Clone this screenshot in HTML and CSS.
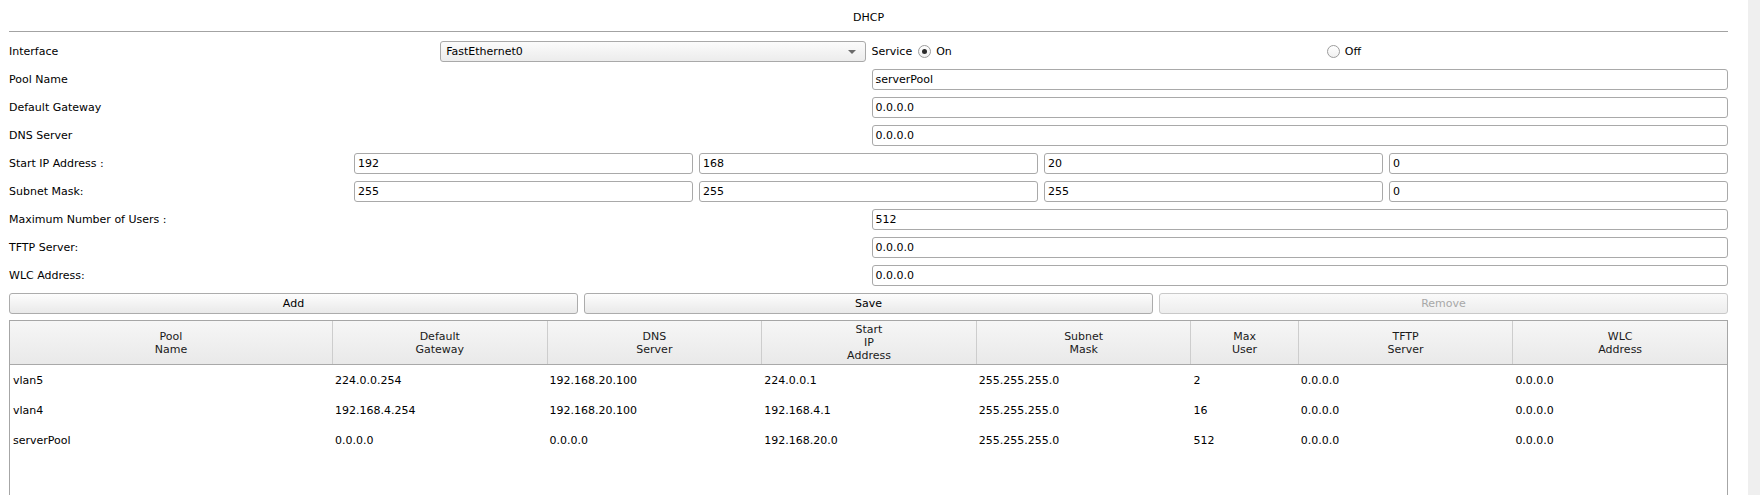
FILE: index.html
```html
<!DOCTYPE html>
<html>
<head>
<meta charset="utf-8">
<link rel="stylesheet" href="styles.css">
</head>
<body>
<div class="window">
  <div class="main">
    <div class="title">DHCP</div>
    <div class="form">
      <div class="row row4">
        <div class="label">Interface</div>
        <div class="select"><span>FastEthernet0</span><span class="arrow"></span></div>
        <div class="service">
          <span class="svc-label">Service</span>
          <span class="radio checked"></span>
          <span class="radio-text">On</span>
        </div>
        <div class="service off">
          <span class="radio"></span>
          <span class="radio-text">Off</span>
        </div>
      </div>
      <div class="row row2">
        <div class="label">Pool Name</div>
        <div class="input">serverPool</div>
      </div>
      <div class="row row2">
        <div class="label">Default Gateway</div>
        <div class="input">0.0.0.0</div>
      </div>
      <div class="row row2">
        <div class="label">DNS Server</div>
        <div class="input">0.0.0.0</div>
      </div>
      <div class="row row5">
        <div class="label">Start IP Address :</div>
        <div class="input">192</div>
        <div class="input">168</div>
        <div class="input">20</div>
        <div class="input">0</div>
      </div>
      <div class="row row5">
        <div class="label">Subnet Mask:</div>
        <div class="input">255</div>
        <div class="input">255</div>
        <div class="input">255</div>
        <div class="input">0</div>
      </div>
      <div class="row row2">
        <div class="label">Maximum Number of Users :</div>
        <div class="input">512</div>
      </div>
      <div class="row row2">
        <div class="label">TFTP Server:</div>
        <div class="input">0.0.0.0</div>
      </div>
      <div class="row row2">
        <div class="label">WLC Address:</div>
        <div class="input">0.0.0.0</div>
      </div>
      <div class="row row3">
        <div class="button">Add</div>
        <div class="button">Save</div>
        <div class="button disabled">Remove</div>
      </div>
    </div>
    <div class="table">
      <div class="thead">
        <div class="th">Pool<br>Name</div>
        <div class="th">Default<br>Gateway</div>
        <div class="th">DNS<br>Server</div>
        <div class="th">Start<br>IP<br>Address</div>
        <div class="th">Subnet<br>Mask</div>
        <div class="th">Max<br>User</div>
        <div class="th">TFTP<br>Server</div>
        <div class="th">WLC<br>Address</div>
      </div>
      <div class="tr">
        <div class="td">vlan5</div><div class="td">224.0.0.254</div><div class="td">192.168.20.100</div><div class="td">224.0.0.1</div><div class="td">255.255.255.0</div><div class="td">2</div><div class="td">0.0.0.0</div><div class="td">0.0.0.0</div>
      </div>
      <div class="tr">
        <div class="td">vlan4</div><div class="td">192.168.4.254</div><div class="td">192.168.20.100</div><div class="td">192.168.4.1</div><div class="td">255.255.255.0</div><div class="td">16</div><div class="td">0.0.0.0</div><div class="td">0.0.0.0</div>
      </div>
      <div class="tr">
        <div class="td">serverPool</div><div class="td">0.0.0.0</div><div class="td">0.0.0.0</div><div class="td">192.168.20.0</div><div class="td">255.255.255.0</div><div class="td">512</div><div class="td">0.0.0.0</div><div class="td">0.0.0.0</div>
      </div>
    </div>
  </div>
  <div class="track"></div>
</div>
</body>
</html>
```

FILE: styles.css
```css
html, body {
  margin: 0;
  padding: 0;
  background: #ffffff;
  overflow: hidden;
}
body {
  font-family: "DejaVu Sans", "Liberation Sans", sans-serif;
  font-size: 11px;
  color: #000000;
}
.window {
  display: flex;
  height: 495px;
}
.main {
  flex: 1;
  padding: 0 20px 0 9px;
  min-width: 0;
}
.track {
  width: 12px;
  background: #efefef;
}
.title {
  text-align: center;
  padding-top: 11px;
  padding-bottom: 6px;
  line-height: 14px;
  border-bottom: 1px solid #a3a3a3;
}
.form {
  display: flex;
  flex-direction: column;
  gap: 7px;
  padding-top: 9px;
}
.row {
  display: grid;
  column-gap: 6px;
  height: 21px;
}
.row2 { grid-template-columns: 1fr 1fr; }
.row3 { grid-template-columns: 1fr 1fr 1fr; }
.row4 { grid-template-columns: 1fr 1fr 1fr 1fr; }
.row5 { grid-template-columns: 1fr 1fr 1fr 1fr 1fr; }
.label {
  display: flex;
  align-items: center;
}
.input {
  box-sizing: border-box;
  height: 21px;
  border: 1px solid #a9a9a9;
  border-radius: 3px;
  background: #ffffff;
  padding-left: 3px;
  display: flex;
  align-items: center;
}
.select {
  box-sizing: border-box;
  height: 21px;
  border: 1px solid #a9a9a9;
  border-radius: 3px;
  background: linear-gradient(#fbfbfb, #ececec);
  padding: 0 9px 0 5px;
  display: flex;
  align-items: center;
  justify-content: space-between;
}
.arrow {
  width: 0;
  height: 0;
  border-left: 4px solid transparent;
  border-right: 4px solid transparent;
  border-top: 4px solid #6a6a6a;
}
.service {
  display: flex;
  align-items: center;
}
.service.off {
  padding-left: 24px;
}
.svc-label {
  margin-right: 6px;
}
.radio {
  box-sizing: border-box;
  width: 13px;
  height: 13px;
  border: 1px solid #9c9c9c;
  border-radius: 50%;
  background: linear-gradient(#ffffff, #f0f0f0);
  display: inline-flex;
  align-items: center;
  justify-content: center;
  margin-right: 5px;
}
.radio.checked::after {
  content: "";
  width: 5px;
  height: 5px;
  border-radius: 50%;
  background: #2b2b2b;
}
.button {
  box-sizing: border-box;
  height: 21px;
  border: 1px solid #acacac;
  border-radius: 3px;
  background: linear-gradient(#fdfdfd, #e9e9e9);
  display: flex;
  align-items: center;
  justify-content: center;
}
.button.disabled {
  color: #a8a8a8;
  border-color: #c9c9c9;
  background: linear-gradient(#fafafa, #ededed);
}
.table {
  margin-top: 6px;
  border: 1px solid #a6a6a6;
  height: 220px;
  box-sizing: border-box;
}
.thead, .tr {
  display: grid;
  grid-template-columns: 1.5fr 1fr 1fr 1fr 1fr 0.5fr 1fr 1fr;
}
.thead {
  height: 43px;
  border-bottom: 1px solid #a9a9a9;
  background: linear-gradient(#f6f6f6, #e9e9e9);
}
.th {
  display: flex;
  align-items: center;
  justify-content: center;
  text-align: center;
  line-height: 13px;
  border-left: 1px solid #cdcdcd;
  color: #1a1a1a;
}
.th:first-child {
  border-left: none;
}
.tr {
  height: 30px;
}
.td {
  display: flex;
  align-items: center;
  padding-left: 3px;
  white-space: nowrap;
}
```
